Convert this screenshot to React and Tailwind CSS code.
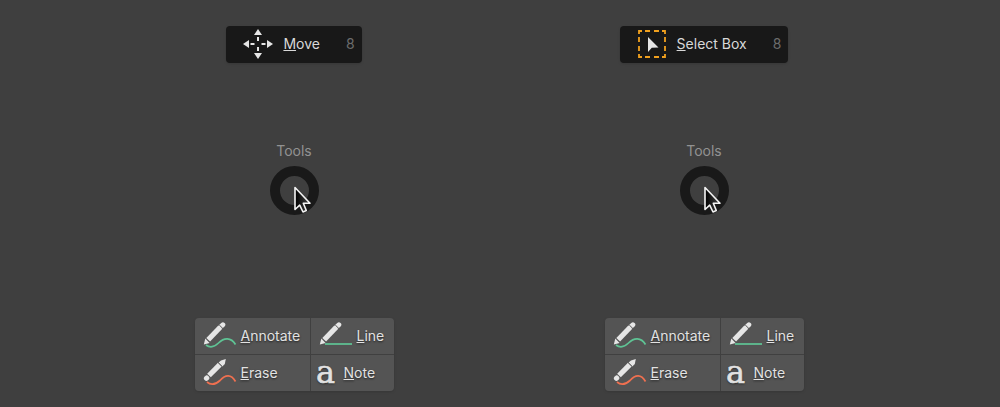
function MoveIcon() {
  return (
    <svg width="30" height="30" viewBox="0 0 30 30" fill="#e6e6e6" aria-hidden="true">
      <path d="M15 0l4 6h-8zM15 30l4-6h-8zM0 15l6-4v8zM30 15l-6-4v8z" />
      <path d="M14 8h2v4h-2zM14 18h2v4h-2zM7.500 14h4v2h-4zM18.500 14h4v2h-4z" />
    </svg>
  );
}

function SelectBoxIcon() {
  return (
    <svg width="30" height="30" viewBox="0 0 30 30" aria-hidden="true">
      <path
        d="M2 5V2H5M8 2h5M17 2h5M25 2h3v3M28 8v5M28 17v5M28 25v3h-3M22 28h-5M13 28H8M5 28H2v-3M2 22v-5M2 13V8"
        fill="none"
        stroke="#f0a01e"
        strokeWidth="1.800"
      />
      <path d="M11 8v15l3.800-4.200 6.700-.3z" fill="#e6e6e6" />
    </svg>
  );
}

function Pencil() {
  return (
    <g fill="none" stroke="#e6e6e6" strokeWidth="5.200">
      <path d="M5.200 17.800L17.200 5.200" />
      <path d="M18.200 4.200l.5-.5M19.300 3.400l.6-.6" strokeLinecap="round" strokeWidth="4.800" />
      <path d="M16.200 2.900l3.800 3.800" stroke="#545454" strokeWidth="1" />
      <path d="M.8 22.600l1.500-6 4.300 4.300z" fill="#e6e6e6" stroke="none" />
    </g>
  );
}

function AnnotateIcon() {
  return (
    <svg width="34" height="28" viewBox="0 0 34 28" aria-hidden="true">
      <path d="M3 23C7 26 11 25.500 15.500 21C21 15.500 28 15 32.500 22.500" fill="none" stroke="#5fc495" strokeWidth="1.700" />
      <Pencil />
    </svg>
  );
}

function LineIcon() {
  return (
    <svg width="34" height="28" viewBox="0 0 34 28" aria-hidden="true">
      <path d="M6 22h27" stroke="#5fc495" strokeWidth="1.700" />
      <Pencil />
    </svg>
  );
}

function EraseIcon() {
  return (
    <svg width="34" height="28" viewBox="0 0 34 28" aria-hidden="true">
      <path d="M4 23C8 26.500 12 26 17 21.500C22 16 28 14.500 32.500 22.500" fill="none" stroke="#f07050" strokeWidth="1.700" />
      <g fill="none" stroke="#e6e6e6" strokeWidth="5.200">
        <path d="M6 16.500L16.800 5.700" />
        <path d="M3.800 18.900l-.4.400" strokeLinecap="round" strokeWidth="5" />
        <path d="M22.800 0l-1 5-2.400 2.400-3.800-3.800 2.400-2.200z" fill="#e6e6e6" stroke="none" />
        <path d="M15.300 3.700l3.700 3.700" stroke="#545454" strokeWidth=".8" />
      </g>
    </svg>
  );
}

function Cursor() {
  return (
    <svg className="absolute left-3.5 top-2.5" width="18" height="29" viewBox="0 0 18 29" aria-hidden="true">
      <defs>
        <linearGradient id="cursor-fill" x1="0" y1="0" x2="1" y2="0">
          <stop offset="0" stopColor="#000000" />
          <stop offset="1" stopColor="#444444" />
        </linearGradient>
      </defs>
      <path
        d="M1 1.500v22l4.700-4.300 3.300 6.800 3.300-1.500-3-7.200h6.700z"
        fill="url(#cursor-fill)"
        stroke="#f4f4f4"
        strokeWidth="1.600"
        strokeLinejoin="round"
      />
    </svg>
  );
}

function Label({ text }) {
  return (
    <span className="whitespace-nowrap">
      <span className="underline decoration-1 underline-offset-1">{text[0]}</span>
      {text.slice(1)}
    </span>
  );
}

function Cell({ icon, text, corner = "" }) {
  return (
    <button
      type="button"
      className={`flex h-9 items-center gap-1 bg-[#545454] px-2 text-[#e2e2e2] [text-shadow:0_1px_2px_#222] ${corner}`}
    >
      {icon}
      <Label text={text} />
    </button>
  );
}

function PieMenu({ icon, text }) {
  return (
    <section className="flex flex-col items-center" aria-label={text}>
      <button
        type="button"
        className="flex h-[37px] items-center gap-2.5 rounded bg-[#181818] pl-[17px] pr-[7px] pb-0.5 text-[#d8d8d8] shadow"
      >
        {icon}
        <Label text={text} />
        <span className="ml-4 text-[#6c6c6c]">8</span>
      </button>
      <h2 className="mt-[78px] leading-5 text-[#929292]">Tools</h2>
      <div className="relative mt-[5px] size-[49px] rounded-full border-10 border-[#191919]">
        <Cursor />
      </div>
      <div className="mt-[103px] grid grid-cols-[115px_83px] gap-px rounded bg-[#404040] shadow">
        <Cell icon={<AnnotateIcon />} text="Annotate" corner="rounded-tl" />
        <Cell icon={<LineIcon />} text="Line" corner="rounded-tr" />
        <Cell icon={<EraseIcon />} text="Erase" corner="rounded-bl" />
        <button
          type="button"
          className="flex h-9 items-center gap-2 rounded-br bg-[#545454] pl-[5px] text-[#e2e2e2] [text-shadow:0_1px_2px_#222]"
        >
          <span className="flex w-5 justify-center pb-0.5 font-['DejaVu_Serif',serif] text-[32px] leading-8 [-webkit-text-stroke:0.6px_#e2e2e2]">
            a
          </span>
          <Label text="Note" />
        </button>
      </div>
    </section>
  );
}

export default function App() {
  return (
    <main className="min-h-screen border-b border-[#373737] bg-[#3f3f3f] pt-[26px] pr-0.5 pb-4 font-['Inter',sans-serif] text-sm">
      <div className="mx-auto grid max-w-[820px] grid-cols-2">
        <PieMenu icon={<MoveIcon />} text="Move" />
        <PieMenu icon={<SelectBoxIcon />} text="Select Box" />
      </div>
    </main>
  );
}
